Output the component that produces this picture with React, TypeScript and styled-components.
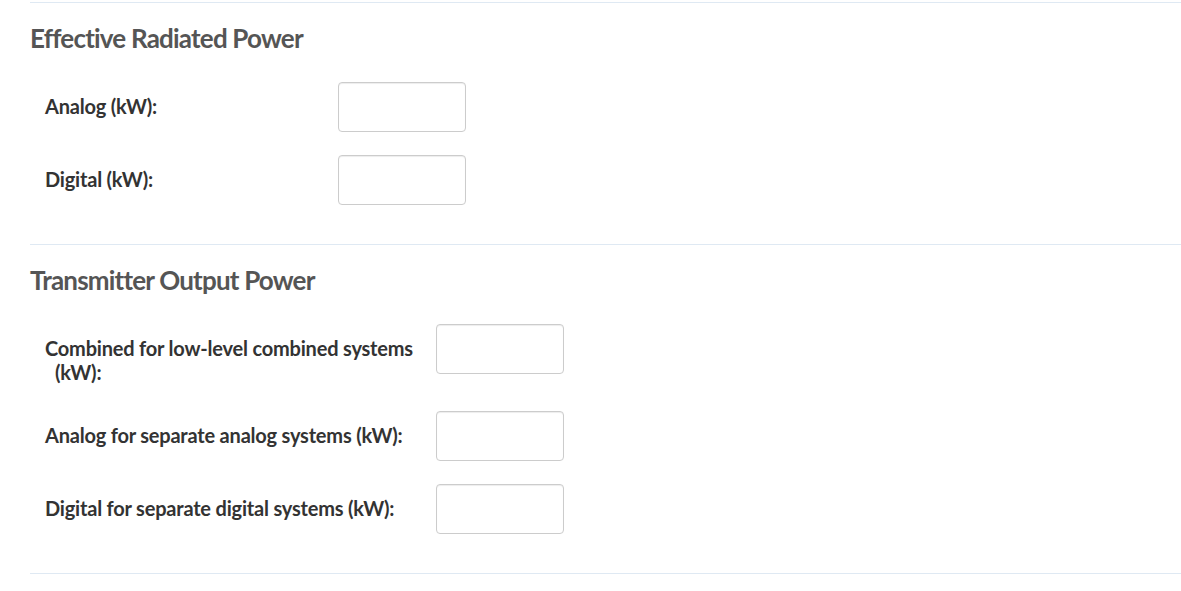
import React from "react";
import styled, { createGlobalStyle } from "styled-components";

const Global = createGlobalStyle`
  html, body { margin: 0; padding: 0; background: #fff; }
  body { font-family: Lato, "Noto Sans", sans-serif; }
`;

const Page = styled.div`
  padding: 2px 0 0 30px;
`;

const Section = styled.section`
  border-top: 1px solid #dfe9f3;
  padding-bottom: 39px;
  &:last-child { border-bottom: 1px solid #dfe9f3; }
`;

const Heading = styled.h2`
  margin: 0;
  padding: 18px 0 0;
  height: 58px;
  box-sizing: border-box;
  font-size: 26px;
  line-height: 34px;
  font-weight: 700;
  letter-spacing: -0.8px;
  color: #555;
`;

const Rows = styled.div`
  display: flex;
  flex-direction: column;
  gap: 23px;
  padding-left: 15px;
  padding-top: 21px;
`;

const Row = styled.div<{ $labelWidth: number }>`
  display: grid;
  grid-template-columns: ${(p) => p.$labelWidth}px 128px;
  align-items: start;
`;

const Label = styled.label`
  padding: 12px 20px 4px 0;
  font-size: 20px;
  line-height: 24px;
  font-weight: 700;
  letter-spacing: -0.2px;
  color: #333;
`;

const Indent = styled.span`
  padding-left: 10px;
`;

const Input = styled.input`
  box-sizing: border-box;
  width: 128px;
  height: 50px;
  border: 1px solid #ccc;
  border-radius: 4px;
  box-shadow: inset 0 1px 1px rgba(0, 0, 0, 0.075);
  background: #fff;
  font-family: inherit;
  font-size: 16px;
  padding: 6px 10px;
  outline: none;
`;

type Field = { label: React.ReactNode };

const FormSection: React.FC<{ title: string; labelWidth: number; fields: Field[] }> = ({
  title,
  labelWidth,
  fields,
}) => (
  <Section>
    <Heading>{title}</Heading>
    <Rows>
      {fields.map((f, i) => (
        <Row key={i} $labelWidth={labelWidth}>
          <Label>{f.label}</Label>
          <Input type="text" />
        </Row>
      ))}
    </Rows>
  </Section>
);

export default function App() {
  return (
    <>
      <Global />
      <Page>
        <FormSection
          title="Effective Radiated Power"
          labelWidth={293}
          fields={[{ label: "Analog (kW):" }, { label: "Digital (kW):" }]}
        />
        <FormSection
          title="Transmitter Output Power"
          labelWidth={391}
          fields={[
            {
              label: (
                <>
                  Combined for low-level combined systems
                  <br />
                  <Indent>(kW):</Indent>
                </>
              ),
            },
            { label: "Analog for separate analog systems (kW):" },
            { label: "Digital for separate digital systems (kW):" },
          ]}
        />
      </Page>
    </>
  );
}
